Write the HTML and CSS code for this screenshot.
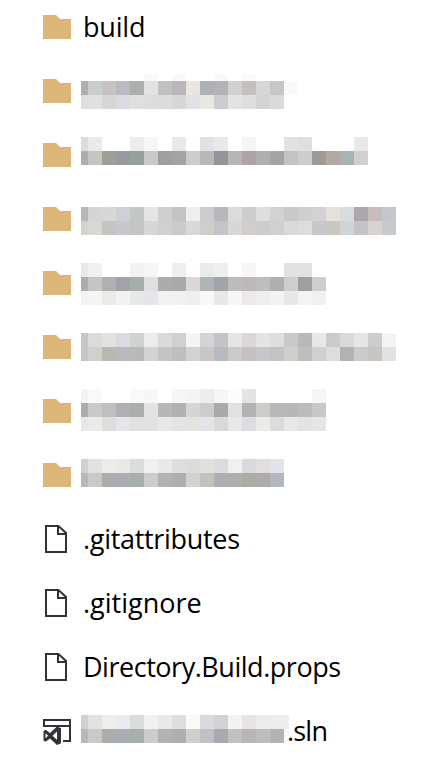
FILE: index.html
```
<!DOCTYPE html>
<html lang="en">
<head>
<meta charset="utf-8">
<title>Files</title>
<link rel="stylesheet" href="styles.css">
</head>
<body>
<svg class="defs" width="0" height="0" aria-hidden="true">
  <symbol id="folder" viewBox="0 0 28 24"><path d="M0 0h13l4 4h11v20H0z" fill="#dcb67a"/></symbol>
  <symbol id="file" viewBox="0 0 28 28"><path d="M3 1h12.400L23 7.900V27H3zM15 1v8h8" fill="none" stroke="#343236" stroke-width="2"/></symbol>
  <symbol id="solution" viewBox="0 0 28 28">
    <path d="M1 10V3h26v21h-7M1 9h26" fill="none" stroke="#343236" stroke-width="2"/>
    <path fill-rule="evenodd" fill="#343236" d="M14 9.500l4 1.800v15l-4 1.700-7-6.500-4.300 3.300L.5 23.500v-9.500l2.200-1.300 4.300 3.400zM14 14.500l-4.500 4.200 4.500 4.100zM2.500 16.200v5l2.600-2.500z"/>
  </symbol>
</svg>
<ul class="files">
  <li class="row"><svg class="icon folder"><use href="#folder"/></svg><span class="name build">build</span></li>
  <li class="row"><svg class="icon folder"><use href="#folder"/></svg><span class="mosaic m2"></span></li>
  <li class="row"><svg class="icon folder"><use href="#folder"/></svg><span class="mosaic m3"></span></li>
  <li class="row"><svg class="icon folder"><use href="#folder"/></svg><span class="mosaic m4"></span></li>
  <li class="row"><svg class="icon folder"><use href="#folder"/></svg><span class="mosaic m5"></span></li>
  <li class="row"><svg class="icon folder"><use href="#folder"/></svg><span class="mosaic m6"></span></li>
  <li class="row"><svg class="icon folder"><use href="#folder"/></svg><span class="mosaic m7"></span></li>
  <li class="row"><svg class="icon folder"><use href="#folder"/></svg><span class="mosaic m8"></span></li>
  <li class="row"><svg class="icon"><use href="#file"/></svg><span class="name attributes">.gitattributes</span></li>
  <li class="row"><svg class="icon"><use href="#file"/></svg><span class="name">.gitignore</span></li>
  <li class="row"><svg class="icon"><use href="#file"/></svg><span class="name props">Directory.Build.props</span></li>
  <li class="row"><svg class="icon"><use href="#solution"/></svg><span class="mosaic m12"></span><span class="name sln">.sln</span></li>
</ul>
<script src="mosaic.js"></script>
</body>
</html>
```
FILE: styles.css
```
body {
  margin: 0;
  background: #fff;
  color: #000;
  font-family: "Open Sans", "Noto Sans", sans-serif;
  font-size: 27px;
  overflow: hidden;
}
.defs { display: none; }
.files {
  list-style: none;
  margin: -5px 0 0;
  padding: 0 0 0 43px;
}
.row {
  display: flex;
  align-items: center;
  height: 64px;
}
.icon { width: 28px; height: 28px; flex: none; }
.folder { height: 24px; }
.name { margin-left: 12px; line-height: 36px; white-space: nowrap; }
.build { letter-spacing: -0.2px; }
.attributes { letter-spacing: -0.31px; }
.props { letter-spacing: -0.47px; }
.mosaic { margin-left: 10px; align-self: flex-start; flex: none; }
.line { display: flex; height: 14px; }
.cell { width: 14px; flex: none; }
.cell:first-child { width: 7px; }
.m2 { margin-top: 15px; }
.m2 .line:first-child { height: 7px; }
.m3 { margin-top: 14px; }
.m4 { margin-top: 20px; }
.m5 { margin-top: 12px; }
.m6 { margin-top: 18px; }
.m7 { margin-top: 10px; }
.m8 { margin-top: 16px; }
.m12 { margin-top: 16px; }
.m12 .cell:last-child { width: 5px; }
.sln { margin-left: -2px; letter-spacing: -0.8px; }
```
FILE: mosaic.js
```
// Cell colours of each obscured name, one string per line; "-" leaves a cell blank.
const mosaics = {
  m2: [
    "- - - - - f9f9f9 - f9f9f9 - - f9f9f9 - fafafa",
    "afafaf c9cdcb c6c4c2 b9bbc1 aab0ae e2e2e0 c1c1c1 b9b7b9 e9e5e2 b0b1b3 b1b3b8 d1d1d1 c4c0be d7d7d7 c7c7c7 f9fafc",
    "dfdfdf e1e0de d6d6d4 d9dbe1 dedfdf dbdedd dcdcdc d7d7d7 e0e2e5 e9e7e5 cccdd0 e3e3e3 e0dddf d4d4d4 dadadd"],
  m3: [
    "dcdcdc e8ebea - - ededed f6f6f6 - e9e9e9 fefefc e1e2e6 e9e9e9 - f5f5f5 - - e3e2e0 dfdfde - - - e9e9e9",
    "adadad c5c6c1 9f9e99 969aa1 999f9d c8cac8 a09f9d a3a3a3 cdcccb b9b8b7 92969c b6b6b6 aca4a5 aeafb1 a5a3a7 c3c3c3 cdcec9 9b9b9b b1a9a2 a9b2b5 d0d0d3"],
  m4: [
    "b9b7b5 d3d6d5 d9d7d6 cdd0d5 c4c7c5 e5e5e3 cfcfcd c5c2c6 f0efed cccdcf b7b8be dbdbdb cfcccd dedede d2d2d2 c9c9c9 cfcfcd d2d2d2 e4e0db d8dcdd aba7ac c7bcb9 c2c8cd",
    "d2d2d2 d9d8d3 c4c4c2 c6c8cd c3c6c4 d6d8d7 d0d0d0 cbcbcb d9d9d9 d0cdcb c4c5ca d7d7d7 d1cdcb cbccce cfd0d3 dadad9 dddddb c8c8c8 cac6c0 cfd4d6 c5c3c7 d7d3cf c5cacd"],
  m5: [
    "e8e8e8 f0f0f0 - - f2f2f2 f6f6f6 - efefef fefefc ebebeb efefef - f6f6f6 - - e2e1de e1e1e1 -",
    "adadad c5c6c1 b2b1af a1a3aa a8aeac dfdfdd adabac aaaaaa ddd8d5 b2b3b5 a1a5ab bcbcbc bdb9b8 bbbdbf b0aeb0 cfcdcf 9f9f9d cdced1",
    "f2f2f2 f5f5f3 ebebe9 f3f3f3 e7e8e8 e5e6e9 f2f2f2 f1f1f1 efefef f8f8f8 e8e8e8 f7f7f7 ebe9ea eeeeee f3f3f3 e9e8e6 f4f4f2 f0f0f0"],
  m6: [
    "c6c6c6 dadcdb e3e2e0 dadbde cfd2d1 ececec dadada d0d0d0 f6f5f3 d3d4d6 c4c4c7 e6e6e6 dad8d9 e4e4e4 dedede cac8c9 b9b9b7 e7e8ea cccacb d8dadb e7e6e4 cdcdcd f3f4f6",
    "c6c6c6 d0d1cc b8b9b2 b9bac0 b7bab8 d2d4d1 c4c4c4 bebebe d3d3d3 c9c7c4 b6bbc1 cbcbcb c5c1c0 c6c7ca c3c3c7 cfcecb bebebc d0d0d0 dddde0 b3b1b3 c9cccb c8c4c0 e1e2e4"],
  m7: [
    "f3f3f3 f9f9f9 - - f9f9f9 f7f7f7 - f6f6f6 f5f4f2 ebedef f6f6f6 fcfcfa e4e4e4 - - - - f6f6f6",
    "adadad c9c9c7 c0bfbd aeb0b6 a9afad e3e3e1 b8b7b5 b2b0b4 d5d5d3 cdcdcf abaaa9 e0e2e6 b3b3b6 cdccc7 bbb7b5 b5b7b8 babcbe c7c9c8",
    "e7e7e7 ebebe9 dededc e4e6ea e1e1e1 e0e2e1 e8e8e8 e4e4e4 e3e3e1 e2e4e7 d9d9d9 e8e8e6 dddde1 ecebe9 dcdcdc e7e9e8 e3e3e3 e5e6e9"],
  m8: [
    "d1d1d1 e1e3e2 ececea e9e9e9 dbdddc f0f0ee e9e9e9 dfddde dddcd8 e0e0e1 dcdcde f0f0f0 dadadb e2dedb e0e5ea",
    "bab9b7 cbc9c5 aeada9 a9adb4 a8aeac cbcecc b5b2b4 afafaf d2d2d0 c2c1bc afaeb4 aeb0b0 acaba6 aeacaa b2b7c1"],
  m12: [
    "d1d1d1 e1e3e2 eeeeec eaebec dadddc f1f1ef e9e9e9 dfddde fbfaf8 d8dadd d1d2d6 f3f3f3 e6e4e5 ececec ededef eeeef2",
    "bab9b7 cbc9c5 aeada9 a9adb4 a8aeac cbcecc b5b2b4 afafaf cfcfcc c1c1c1 a9aab1 c1c1c1 b9b5b4 bdbec0 b3b3b6 faf9f8"]
};

for (const [name, lines] of Object.entries(mosaics)) {
  const host = document.querySelector("." + name);
  for (const text of lines) {
    const line = document.createElement("span");
    line.className = "line";
    for (const color of text.split(" ")) {
      const cell = document.createElement("span");
      cell.className = "cell";
      if (color !== "-") cell.style.background = "#" + color;
      line.append(cell);
    }
    host.append(line);
  }
}
```
